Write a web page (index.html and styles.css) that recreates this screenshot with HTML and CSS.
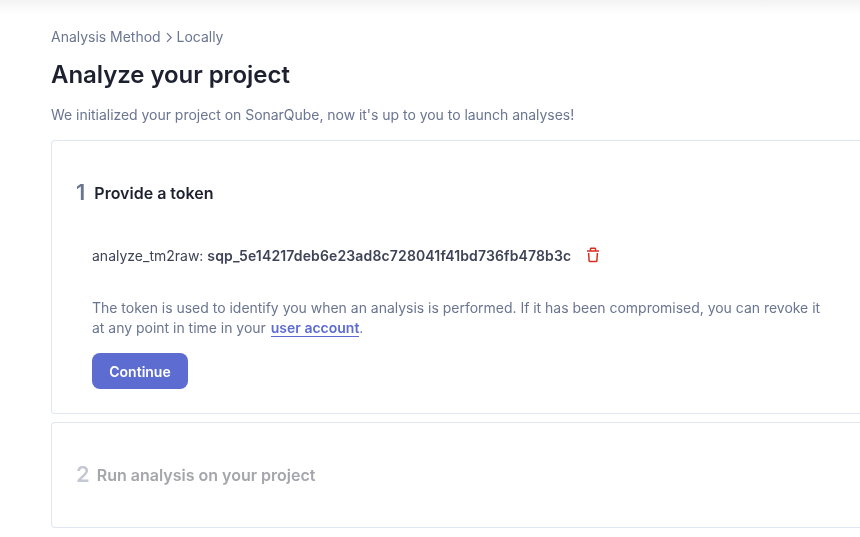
FILE: index.html
```html
<!DOCTYPE html>
<html lang="en">
<head>
<meta charset="utf-8">
<title>Analyze your project</title>
<link rel="stylesheet" href="styles.css">
</head>
<body>
<main class="page">
  <nav class="breadcrumbs"><span>Analysis Method</span><svg class="chevron" width="16" height="16" viewBox="0 0 16 16"><path d="M6 4.2 10.2 8.5 6 12.8" fill="none" stroke="currentColor" stroke-width="1.2"/></svg><span>Locally</span></nav>
  <h1 class="title">Analyze your project</h1>
  <p class="intro">We initialized your project on SonarQube, now it's up to you to launch analyses!</p>
  <section class="step step-open">
    <header class="step-header"><span class="step-number">1</span><h2 class="step-title">Provide a token</h2></header>
    <div class="step-body">
      <div class="token"><span>analyze_tm2raw: <strong>sqp_5e14217deb6e23ad8c728041f41bd736fb478b3c</strong></span>
        <button class="delete" aria-label="Delete"><svg width="16" height="16" viewBox="0 0 16 16" fill="none" stroke="currentColor" stroke-width="1.5" stroke-linejoin="round"><path d="M2 4h12M5.5 4V1.9q0-.7.7-.7h3.6q.7 0 .7.7V4M3.6 6l.5 7.6q.1.9 1 .9h5.8q.9 0 1-.9l.5-7.6"/></svg></button>
      </div>
      <p class="note">The token is used to identify you when an analysis is performed. If it has been compromised, you can revoke it at any point in time in your <a class="link" href="#">user account</a>.</p>
      <button class="continue">Continue</button>
    </div>
  </section>
  <section class="step step-closed">
    <header class="step-header"><span class="step-number">2</span><h2 class="step-title">Run analysis on your project</h2></header>
  </section>
</main>
</body>
</html>
```
FILE: styles.css
```css
* { box-sizing: border-box; }
body {
  margin: 0;
  height: 537px;
  overflow: hidden;
  background: linear-gradient(#f3f3f3, #fff 14px);
  font: 14px/20px Inter, sans-serif;
  color: #6a7590;
}
.page { padding: 27px 0 0 51px; will-change: transform; }
.breadcrumbs { display: flex; align-items: center; height: 20px; letter-spacing: -0.02px; }
.title { margin: 12px 0 0; font-size: 24px; line-height: 32px; font-weight: 600; letter-spacing: -0.06px; color: #1d212f; }
.intro { margin: 14px 0 0; letter-spacing: -0.033px; }
.step { border: 1px solid #e1e6f3; border-right: 0; border-radius: 4px 0 0 4px; padding: 40px 0 40px 24px; background: #fff; }
.step-open { height: 274px; margin-top: 15px; }
.step-closed { height: 106px; margin-top: 8px; color: #a5a6ac; }
.step-header { display: flex; align-items: center; height: 24px; gap: 8px; }
.step-number { position: relative; top: -1px; font-size: 22px; font-weight: 600; }
.step-open .step-number { margin-right: 1px; }
.step-closed .step-number { margin-right: -1px; color: #c3c8d3; }
.step-title { margin: 0; font-size: 16px; font-weight: 600; color: #1d212f; }
.step-closed .step-title { color: inherit; }
.step-body { padding-left: 16px; margin-top: 38px; }
.token { display: flex; align-items: center; height: 26px; gap: 14px; color: #3e4357; }
.token strong { font-weight: 600; letter-spacing: 0.137px; }
.delete { display: flex; margin-top: -2px; padding: 0; border: 0; background: none; color: #d92d20; }
.note { margin: 29px 0 0; width: 740px; letter-spacing: -0.018px; }
.link { margin-left: 1px; color: #5d6cd0; font-weight: 600; text-decoration: none; border-bottom: 1px solid; letter-spacing: 0; }
.continue { display: block; margin-top: 15px; width: 96px; height: 36px; padding: 2px 0 0; border: 0; border-radius: 8px; background: #5d6cd0; color: #fff; font: 600 14px/20px Inter, sans-serif; }
```
